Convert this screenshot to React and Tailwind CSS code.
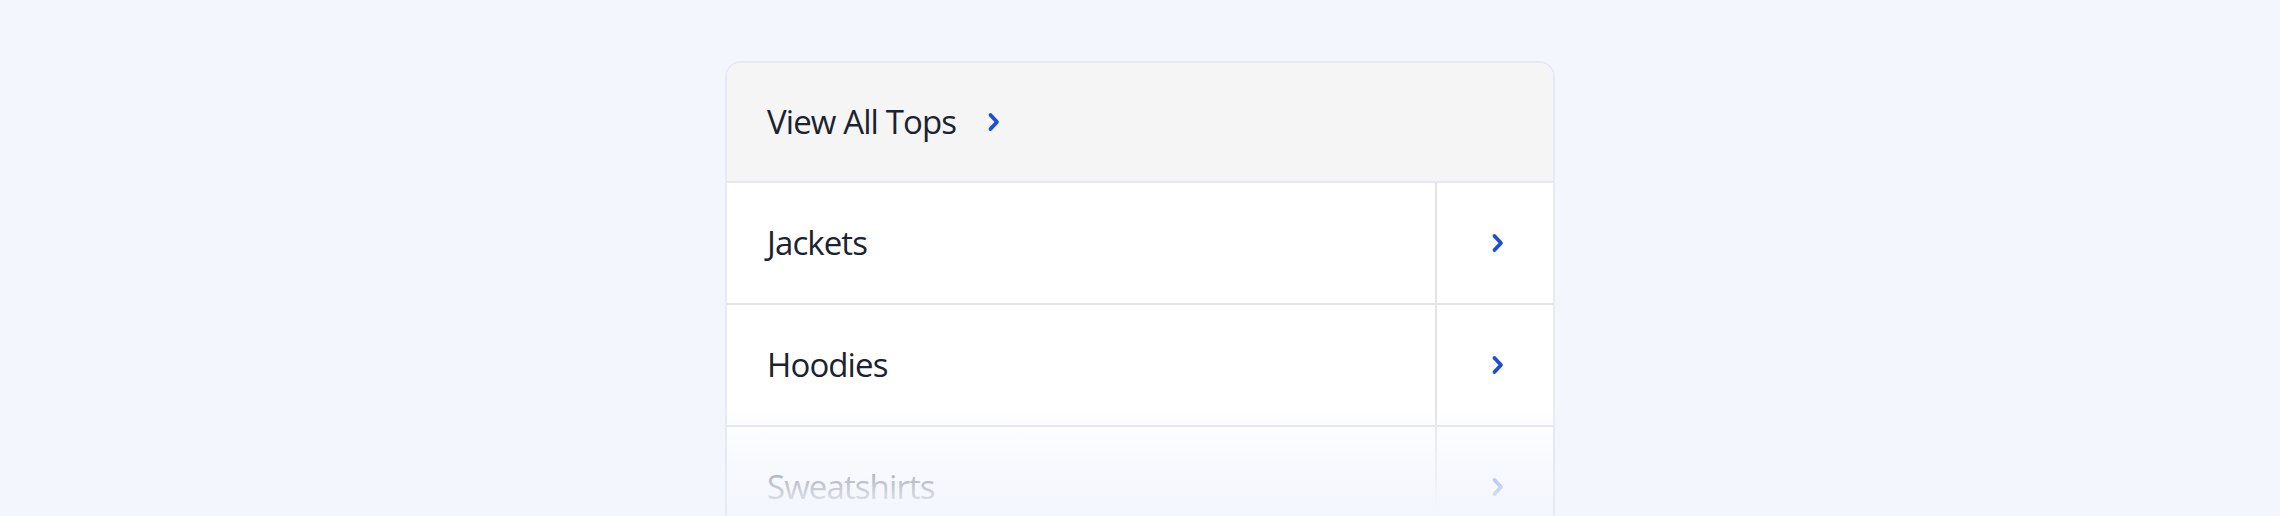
import React from "react";

const rows = ["Jackets", "Hoodies", "Sweatshirts"];

function Chevron({ className = "" }) {
  return (
    <svg viewBox="0 0 13 20" className={className} fill="none">
      <path d="M3.5 3 L10 10 L3.5 17" stroke="currentColor" strokeWidth="3.8" strokeLinecap="round" strokeLinejoin="round" />
    </svg>
  );
}

export default function App() {
  return (
    <div className="min-h-[516px] bg-[#f3f6fd] font-['Open_Sans',sans-serif] text-[#1c2230]">
      <div className="flex justify-center pt-[61px]">
        <div className="relative h-[455px] w-[830px] overflow-hidden rounded-t-2xl border-2 border-b-0 border-[#e6eaf6] bg-white">
          <div className="flex h-[120px] items-center gap-[31px] border-b-2 border-[#e6eaf6] bg-[#f5f5f5] pl-10">
            <span className="text-[33px] tracking-[-0.9px]">View All Tops</span>
            <Chevron className="h-5 w-[13px] text-[#1d4ed8]" />
          </div>
          {rows.map((r) => (
            <div key={r} className="flex h-[122px]">
              <div className="flex flex-1 items-center border-b-2 border-r-2 border-[#e3e4e8] pl-10 text-[33px] tracking-[-0.9px]">
                {r}
              </div>
              <div className="flex w-[116px] items-center justify-center border-b-2 border-[#e3e4e8] pl-1">
                <Chevron className="h-5 w-[13px] text-[#1d4ed8]" />
              </div>
            </div>
          ))}
          <div className="pointer-events-none absolute inset-x-0 bottom-0 h-[110px] bg-gradient-to-b from-[#f3f6fd]/0 via-[#f3f6fd]/60 to-[#f3f6fd]" />
        </div>
      </div>
    </div>
  );
}
